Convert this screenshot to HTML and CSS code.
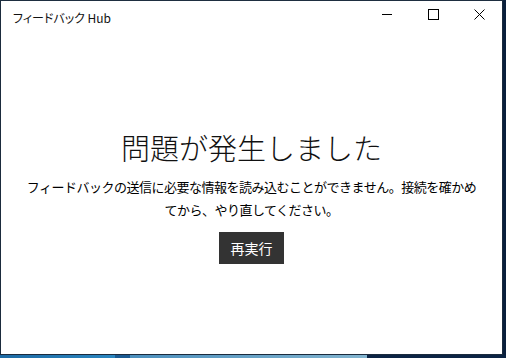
FILE: index.html
```html
<!DOCTYPE html>
<html lang="ja">
<head>
    <meta charset="UTF-8">
    <title>フィードバック Hub</title>
    <link rel="stylesheet" href="styles.css">
</head>
<body>
    <div class="desktop">
        <div class="window">
            <!-- Title bar -->
            <div class="titlebar">
                <span class="title">フィードバック Hub</span>
                <div class="controls">
                    <div class="ctrl">
                        <svg width="10" height="10" viewBox="0 0 10 10"><path d="M0 5.5h10" stroke="#000" stroke-width="1"/></svg>
                    </div>
                    <div class="ctrl">
                        <svg width="11" height="11" viewBox="0 0 11 11"><rect x="0.5" y="0.5" width="10" height="10" fill="none" stroke="#000" stroke-width="1"/></svg>
                    </div>
                    <div class="ctrl">
                        <svg width="11" height="11" viewBox="0 0 11 11"><path d="M0.5 0.5L10.5 10.5M10.5 0.5L0.5 10.5" stroke="#000" stroke-width="1"/></svg>
                    </div>
                </div>
            </div>

            <!-- Error message -->
            <div class="content">
                <h1>問題が発生しました</h1>
                <p>フィードバックの送信に必要な情報を読み込むことができません。接続を確かめ<br>てから、やり直してください。</p>
                <button class="retry">再実行</button>
            </div>
        </div>
        <div class="taskbar">
            <div class="seg seg1"></div>
            <div class="seg seg2"></div>
            <div class="seg seg3"></div>
            <div class="seg seg4"></div>
        </div>
    </div>
</body>
</html>
```

FILE: styles.css
```css
body {
    margin: 0;
    background: #0c2340;
    font-family: "Noto Sans CJK JP", "Noto Sans", sans-serif;
    overflow: hidden;
}
.desktop {
    width: 506px;
    height: 358px;
    background: linear-gradient(90deg, #0f2b4a 0%, #0b2444 60%, #0a1f3c 100%);
}
.window {
    width: 501px;
    height: 353px;
    border: 1px solid #1b2b3d;
    border-top-color: #1e2e40;
    background: #fff;
    display: flex;
    flex-direction: column;
}
.titlebar {
    height: 32px;
    display: flex;
    align-items: center;
    justify-content: space-between;
}
.title {
    font-size: 12px;
    color: #111;
    padding-left: 12px;
    font-feature-settings: "palt";
}
.controls {
    display: flex;
    height: 100%;
}
.ctrl {
    width: 46px;
    height: 100%;
    display: flex;
    align-items: center;
    justify-content: center;
    margin-top: -3px;
}
.content {
    flex: 1;
    display: flex;
    flex-direction: column;
    align-items: center;
    padding-top: 94px;
}
h1 {
    margin: 0;
    font-size: 29px;
    font-weight: 300;
    line-height: 40px;
    color: #111;
}
p {
    margin: 8px 0 0;
    font-size: 13px;
    letter-spacing: -0.5px;
    line-height: 23px;
    text-align: center;
    color: #000;
    white-space: nowrap;
}
.retry {
    margin-top: 11px;
    width: 65px;
    height: 32px;
    border: none;
    background: #333333;
    color: #fff;
    font-family: inherit;
    font-size: 14px;
    padding: 0;
}
.taskbar {
    display: flex;
    height: 3px;
}
.seg1 {
    width: 115px;
    background: linear-gradient(90deg, #1d6aa4, #2a86c0);
}
.seg2 {
    width: 15px;
    background: #1a5a92;
}
.seg3 {
    width: 237px;
    background: linear-gradient(90deg, #4b8fbd, #82b4cf);
}
.seg4 {
    flex: 1;
    background: #0b2444;
}
```
